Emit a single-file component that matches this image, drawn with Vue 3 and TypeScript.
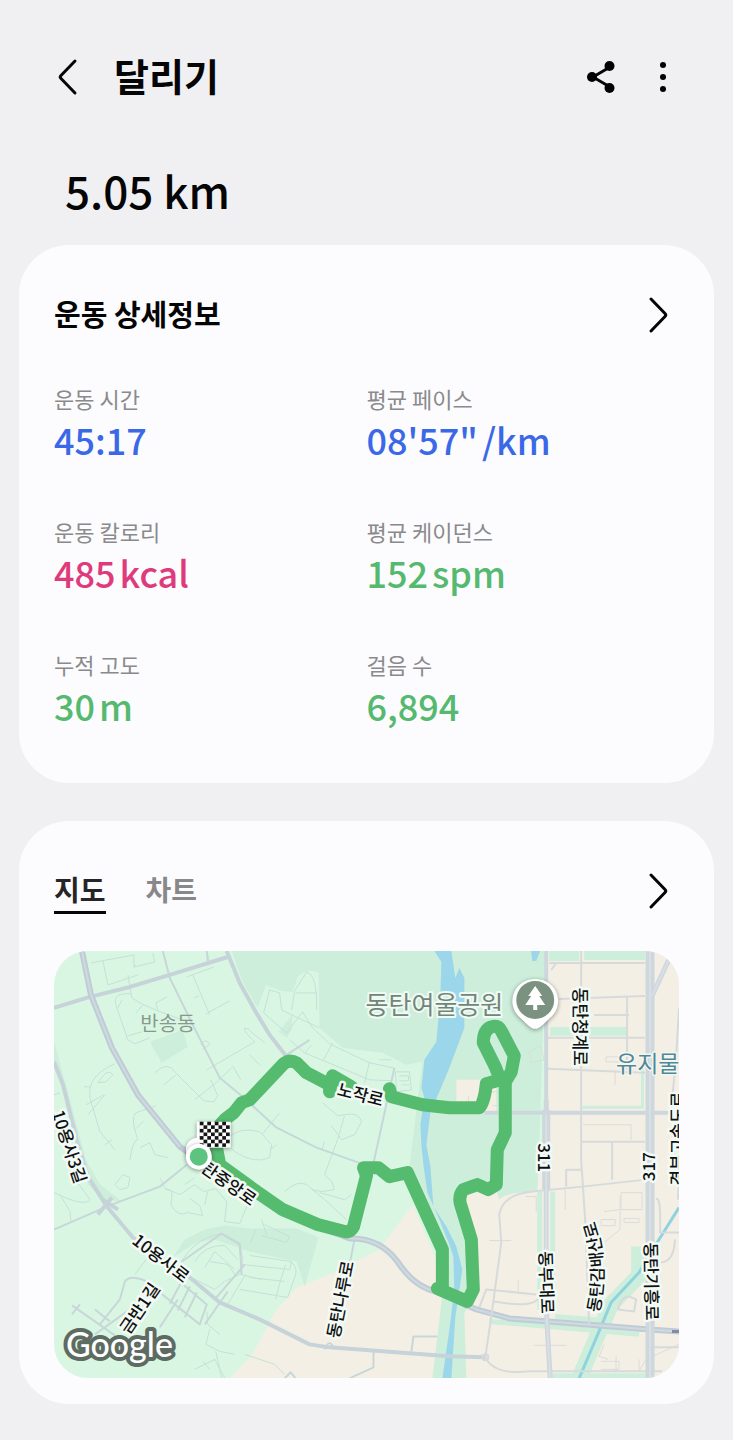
<script setup lang="ts">
import { ref } from 'vue'

interface Stat {
  label: string
  value: string
  unit?: string
  tone: 'blue' | 'pink' | 'green'
}

interface RoadLabel {
  text: string
  x: number
  y: number
  angle: number
}

const stats: Stat[] = [
  { label: '운동 시간', value: '45:17', tone: 'blue' },
  { label: '평균 페이스', value: '08\'57"', unit: '/km', tone: 'blue' },
  { label: '운동 칼로리', value: '485', unit: 'kcal', tone: 'pink' },
  { label: '평균 케이던스', value: '152', unit: 'spm', tone: 'green' },
  { label: '누적 고도', value: '30', unit: 'm', tone: 'green' },
  { label: '걸음 수', value: '6,894', tone: 'green' },
]

const tabs = ['지도', '차트']
const activeTab = ref('지도')

const roadLabels: RoadLabel[] = [
  { text: '노작로', x: 361, y: 1095, angle: 14 },
  { text: '동탄청계로', x: 581, y: 1027, angle: 90 },
  { text: '311', x: 545, y: 1158, angle: 90 },
  { text: '317', x: 650, y: 1167, angle: -90 },
  { text: '동부대로', x: 547, y: 1283, angle: 88 },
  { text: '동탄기흥로', x: 652, y: 1282, angle: 89 },
  { text: '동탄나루로', x: 341, y: 1300, angle: -79 },
  { text: '경부고속도로', x: 679, y: 1139, angle: -90 },
  { text: '10용사3길', x: 69, y: 1147, angle: 72 },
  { text: '10용사로', x: 161, y: 1259, angle: 38 },
  { text: '금반1길', x: 140, y: 1309, angle: -56 },
  { text: '탄중앙로', x: 229, y: 1184, angle: 35 },
]

const flagCells: { x: number; y: number }[] = []
for (let row = 0; row < 7; row++) {
  for (let col = 0; col < 8; col++) {
    if ((row + col) % 2 === 0) flagCells.push({ x: 200 + col * 3.75, y: 1122 + row * 3.6 })
  }
}
</script>

<template>
  <main class="page">
    <header class="bar">
      <button class="icon-button back" type="button" aria-label="뒤로">
        <svg width="22" height="40" viewBox="0 0 22 40"><path d="M19 4 5 18.500Q3.500 20 5 21.500L19 36" /></svg>
      </button>
      <h1 class="title">달리기</h1>
      <button class="icon-button share" type="button" aria-label="공유">
        <svg width="32" height="34" viewBox="0 0 32 34">
          <path d="M24 7 7 17l17 10" />
          <circle cx="23.500" cy="6" r="5" /><circle cx="6" cy="17" r="5" /><circle cx="23.500" cy="28" r="5" />
        </svg>
      </button>
      <button class="icon-button more" type="button" aria-label="더보기">
        <svg width="10" height="34" viewBox="0 0 10 34">
          <circle cx="5" cy="5" r="3" /><circle cx="5" cy="17" r="3" /><circle cx="5" cy="29" r="3" />
        </svg>
      </button>
    </header>

    <p class="distance">5.05 km</p>

    <section class="card details">
      <div class="card-head">
        <h2 class="heading">운동 상세정보</h2>
        <button class="icon-button" type="button" aria-label="운동 상세정보 보기">
          <svg width="22" height="40" viewBox="0 0 22 40"><path d="M4 4 18 18.500Q19.500 20 18 21.500L4 36" /></svg>
        </button>
      </div>
      <dl class="stats">
        <div v-for="s in stats" :key="s.label">
          <dt>{{ s.label }}</dt>
          <dd :class="s.tone">{{ s.value }}<span v-if="s.unit" class="unit">{{ s.unit }}</span></dd>
        </div>
      </dl>
    </section>

    <section class="card route-card">
      <div class="card-head">
        <div class="tabs" role="tablist">
          <button
            v-for="t in tabs"
            :key="t"
            type="button"
            role="tab"
            class="tab"
            :class="{ active: t === activeTab }"
            :aria-selected="t === activeTab"
            @click="activeTab = t"
          >{{ t }}</button>
        </div>
        <button class="icon-button" type="button" aria-label="지도 크게 보기">
          <svg width="22" height="40" viewBox="0 0 22 40"><path d="M4 4 18 18.500Q19.500 20 18 21.500L4 36" /></svg>
        </button>
      </div>

      <svg class="map" viewBox="54 951 626 428" role="img" aria-label="달리기 경로 지도">
        <rect x="54" y="951" width="626" height="428" fill="#d9f6e3" />

        <!-- built-up land -->
        <g class="land">
          <path d="M230 1379 252 1356 277 1310 297 1288 330 1275 380 1250 413 1205 450 1290 440 1379Z" />
          <path d="M546 951H680V1379H465V1313L475 1290 466 1190H538L546 1120Z" />
        </g>

        <!-- parks -->
        <g class="park">
          <path d="M232 951 242 980 258 1008 266 985 282 991 293 992 298 977Q308 967 319 973L320 1028 343 1048 383 1053 407 1065 423 1062 416 1118 410 1168 440 1245 443 1295 433 1379H467L465 1313 475 1300 470 1230 463 1195 497 1190 500 1200Q505 1193 538 1192L541 1117 546 951Z" />
          <path d="M150 1042 183 1030 188 1047 162 1063Z" />
          <path d="M54 1042 70 1100 86 1160 100 1185 122 1202 104 1200 88 1185 75 1130 54 1060Z" />
          <path d="M173 1258 185 1240 205 1230 225 1226 250 1229 297 1229 319 1238 305 1287 297 1262 250 1252 215 1240 196 1243Z" />
          <path d="M279 1032 293 1014 292 1030 287 1038Z" />
          <path d="M550 951H580V961H550ZM585 951H646V960H585ZM551 1027H627V1036H551ZM583 1106H645V1109H583ZM642 1070H645V1109H642ZM538 1192H543V1310H538ZM551 1192H556V1310H551ZM632 1247H643V1285H632ZM550 1374H650V1379H550Z" />
          <path d="M490 1322 550 1327 640 1335M556 1317 605 1321" class="park-line" />
          <path d="M652 1258 640 1276 612 1305 600 1332 580 1379" class="bank" />
        </g>
        <path class="land" d="M457 1080H497V1112H457Z" />

        <!-- water -->
        <path class="water" d="M435 951 442 962 441 995 437 1042 425 1060 422 1088 425 1098 421 1125 422 1145 424 1165 428 1193 440 1220 450 1245 454 1257 455 1290 450 1330 443 1379H452L456 1317 463 1270 457 1247 447 1227 434 1207 431 1167 427 1145 431 1112 440 1092 450 1068 465 1028 465 978 460 968 456 978 452 951ZM532 951H541L537 961H533Z" />
        <path class="creek" d="M680 1208 660 1240 640 1273 612 1303 602 1327 580 1379" />

        <!-- lanes on the west side -->
        <g class="lane">
          <path d="M91 963 112 959 134 955 134 967 155 962 153 953M103 961 108 985 138 975M134 966 136 965M128 975 132 998 142 1004 158 1011 180 1019M158 1011 156 1003 167 997M132 994Q112 992 116 1005L128 1040 135 1044 150 1038M118 1008 122 1000M136 1013 143 1005M128 1036 142 1032" />
          <path d="M187 977 214 967M193 975 210 1015M194 998 199 996M206 1014 230 1001M207 951 210 963M201 1045Q206 1037 210 1045L203 1049M207 1070 255 1042 248 1035Q240 1025 250 1030M155 1073Q168 1060 176 1073L204 1101 214 1102 218 1096 211 1080M164 1085 176 1075M195 1100 215 1084 232 1068M241 1080 233 1066" />
          <path d="M115 1064Q82 1078 92 1105L100 1132 115 1150M84 1087H91M86 1105 104 1095M98 1083Q108 1067 113 1075L106 1082ZM88 1115 105 1095M135 1130 144 1121M130 1160Q133 1140 138 1140 130 1118 136 1113L156 1106M140 1148 150 1143 155 1155 168 1158M105 1145 112 1140" />
          <path d="M54 1193Q85 1208 90 1200L72 1175M60 1195 70 1212 71 1222M54 1095 60 1093M115 1185 123 1175 130 1178 128 1188 120 1190ZM160 1178 166 1190Q175 1188 171 1205 178 1218 188 1213L203 1216 200 1206 190 1199M166 1189 180 1195 195 1185 204 1192 216 1189 227 1202 225 1222 240 1224M185 1185 195 1178M208 1192 205 1205M240 1224 250 1200" />
          <path d="M230 1137Q240 1127 260 1132L272 1145 270 1158Q255 1165 235 1152L228 1145M270 1150 277 1145M263 1134 280 1113M323 1103 338 1116 345 1115Q360 1112 362 1122L355 1135 342 1140 332 1126M345 1116 338 1140 325 1175 332 1182 335 1190 322 1192 312 1190M285 1192Q298 1180 307 1185L325 1200 347 1220M320 1193 345 1200 352 1195M322 1150 325 1142" />
          <path d="M264 1013 270 990 280 993 282 1010 290 1014M292 1010 295 991 307 972Q318 975 317 1010M296 993H317M264 1013 287 1033 303 1012 313 1028 330 1044 370 1063 394 1068M290 1014 320 1028M290 1040 305 1053 312 1045M305 1053 370 1080 393 1081M324 1060 333 1043M365 1083 370 1062M380 1060H392M396 1072H410L412 1090 397 1092ZM400 1076H409V1081H400M402 1085H410" />
          <path d="M262 1220 267 1235M265 1225 290 1237 287 1243 262 1236M251 1243 256 1230M250 1031 265 1043M250 1055 260 1065" />
          <path d="M178 1270Q190 1240 222 1234L240 1243 243 1260 240 1275 262 1280M195 1262Q205 1245 225 1246L238 1260M205 1268 215 1252 235 1270M210 1262 228 1265 235 1275M180 1272 215 1290 225 1282 240 1275M226 1308 246 1275M242 1265 290 1270 292 1262 250 1256M290 1262Q298 1266 296 1275L288 1298 240 1290M250 1278 285 1282M276 1300 280 1284 286 1265" />
          <path d="M210 1330 206 1345 220 1352 235 1355M207 1312 208 1325 220 1335M195 1370 215 1360 225 1379M203 1362 210 1370M216 1352 222 1379M135 1275 150 1255M245 1355 275 1365 285 1375" />
        </g>
        <g class="street">
          <path d="M54 1230 100 1210 117 1203 160 1187 187 1165" />
          <path d="M100 1325 120 1300 125 1282Q130 1275 145 1281L200 1325 207 1305 175 1278M185 1318 197 1293M178 1311 190 1287M170 1304 182 1282M160 1328 178 1300M95 1310 110 1322M72 1306 115 1336M72 1315 80 1305M95 1335 130 1310" />
          <path d="M182 1262 222 1234 240 1245 242 1275M215 1300 245 1265M205 1325 228 1292" />
          <path d="M163 951 170 978 193 1025 220 1078 243 1097 277 1128 317 1148 373 1168M207 951 208 961M395 1068 373 1168M355 1240 348 1275M374 1352V1368L350 1379M287 1055 310 1040" />
          <path d="M412 1352 414 1337H438M285 1379 291 1373 296 1379M325 1350Q330 1338 335 1350" />
        </g>
        <g class="avenue">
          <path d="M54 1008 90 997 130 987 170 975 228 957" />
          <path d="M227 951 240 983 256 1012 270 1035 287 1057 330 1085" />
          <path d="M54 1062 63 1085 78 1145 88 1177 107 1207 133 1238 190 1278 220 1303 260 1320 310 1345 330 1348 383 1352 450 1357 486 1358" />
          <path d="M98 1215 112 1198M103 1200 118 1210" />
        </g>
        <path class="trunk" d="M82 951 91 995 112 1048 138 1095 180 1147 215 1170 283 1214 350 1239Q380 1238 398 1262 415 1288 437 1292L477 1310 510 1319 550 1322 650 1330 680 1332" />
        <path class="trunk-core" d="M82 951 91 995 112 1048 138 1095 180 1147M350 1239Q380 1238 398 1262 415 1288 437 1292L477 1310 510 1319 550 1322 650 1330 680 1332" />

        <!-- eastern grid -->
        <g class="lane east">
          <path d="M530 1052 541 1046 545 1060 532 1063ZM607 1057H621V1062H607ZM616 1072V1085M584 1125H632V1140M566 1190V1210M490 1241H512M519 1280V1292M526 1197H537V1212M535 1346H567M622 1193H643V1210H622ZM602 1220H616V1226H602ZM621 1196V1230L605 1243M605 1212 621 1210M625 1219H640V1223H625ZM605 1345 600 1357 609 1360M602 1362H620V1370H602M617 1357V1372H640V1360M640 1372 647 1360 680 1345" />
          <path d="M567 1178V1170H582M490 1092H500V1106H493M469 1096V1105" />
        </g>
        <g class="street east">
          <path d="M550 963H646M552 970 557 963M560 999 646 996M595 1015H630M628 997V1070M548 1038H646M548 1069 646 1073M582 951V1160L586 1220 590 1325M582 1142H646M613 1142V1180M567 1187V1170H582" />
          <path d="M493 1310 502 1243 500 1215Q503 1195 533 1192L583 1187 647 1180M493 1310 486 1358Q495 1376 530 1372H663M480 1308 487 1290 537 1295M495 1302Q540 1310 540 1295M657 1200Q662 1195 661 1233H680M662 1263Q675 1262 676 1240M619 1310Q622 1297 630 1297L637 1300 635 1312ZM655 1348H680M680 1008 677 1060M676 1070 672 1110M680 1180 679 1200" />
          <circle cx="486" cy="1358" r="3" />
        </g>
        <g class="grid-road">
          <path d="M485 1113H680" stroke-width="4" />
          <path d="M547 951V1110" stroke-width="4" />
          <path d="M547 1100V1310L551 1379" stroke-width="5" />
          <path d="M547 1110V1190" stroke-width="8" />
          <path d="M651 951V1379" stroke-width="9" />
          <path d="M672 955 653 996" stroke-width="5" />
        </g>
        <path class="grid-core" d="M651 951V1379M547 1115V1310L551 1379M671 957 653 996" />
        <path d="M673 1332H680" stroke="#8589a8" stroke-width="3" />

        <!-- recorded route -->
        <path
          class="route"
          d="M214 1132 226 1119 234 1113 242 1103 250 1100 284 1064Q290 1059 297 1063L307 1073 330 1085V1092L333 1076 352 1087M390 1089 392 1097 423 1105 450 1108 480 1108Q485 1103 487 1084L501 1080 496 1067 484 1043Q484 1030 492 1027 499 1025 502 1031L515 1056 512 1072 506 1082V1133L498 1150 497 1185 489 1190 478 1185 464 1190Q459 1196 461 1204L472 1240 474 1290 468 1302 438 1289H443V1250L408 1173 390 1177 379 1168 364 1168 367 1176 354 1227Q351 1233 345 1232L318 1225 283 1210 257 1192 220 1165 216 1144"
        />

        <g class="road-labels">
          <text
            v-for="r in roadLabels"
            :key="r.text"
            :x="r.x"
            :y="r.y"
            dy="6"
            :transform="`rotate(${r.angle} ${r.x} ${r.y})`"
          >{{ r.text }}</text>
          <path id="gambaesan" d="M599 1318Q612 1265 594 1217" fill="none" stroke="none" />
          <text><textPath href="#gambaesan" startOffset="50%">동탄감배산로</textPath></text>
        </g>
        <text class="district" x="168" y="1031">반송동</text>
        <text class="park-name" x="435" y="1014">동탄여울공원</text>
        <text class="poi" x="617" y="1072">유지물</text>

        <!-- park pin -->
        <g class="shadowed">
          <path d="M536 979a22 22 0 0 1 17 37C546 1022 541 1029 536 1029S526 1022 519 1016A22 22 0 0 1 536 979Z" fill="#fff" />
        </g>
        <circle cx="536" cy="1000" r="19" fill="#7b9281" />
        <path d="M536 986 543 996H540L546 1005H538V1010H534V1005H526L532 996H529Z" fill="#fff" />

        <!-- start and finish markers -->
        <g class="shadowed">
          <circle cx="198" cy="1150" r="12" fill="#fff" />
          <path d="M197 1122H200V1150H197Z" fill="#fff" />
          <rect x="200" y="1122" width="31" height="26" fill="#fff" />
        </g>
        <rect v-for="(c, i) in flagCells" :key="i" :x="c.x" :y="c.y" width="3.750" height="3.600" fill="#151515" />
        <g class="shadowed"><circle cx="199" cy="1157" r="13" fill="#fff" /></g>
        <circle cx="199" cy="1157" r="9" fill="#5cc47f" />

        <text class="brand" x="66" y="1358">Google</text>
      </svg>
    </section>
  </main>
</template>

<style>
body {
  margin: 0;
  background: #f0f0f2;
}
</style>

<style scoped>
.page {
  min-height: 100vh;
  box-sizing: border-box;
  padding: 48px 19px 35px;
  background: #f0f0f2;
  color: #050505;
  font-family: "Noto Sans CJK KR", "Noto Sans", sans-serif;
}

.bar {
  display: flex;
  align-items: center;
  height: 58px;
  padding: 0 46px 0 37px;
}

.icon-button {
  display: flex;
  padding: 0;
  border: 0;
  background: none;
  cursor: pointer;
}

.icon-button path {
  fill: none;
  stroke: #050505;
  stroke-width: 3;
  stroke-linecap: round;
  stroke-linejoin: round;
}

.title {
  flex: 1;
  margin: 0 0 0 36px;
  padding-bottom: 4px;
  font-size: 38px;
  line-height: 54px;
  font-weight: 700;
}

.more {
  margin-left: 40px;
}

.distance {
  margin: 52px 46px 22px;
  font-size: 44px;
  line-height: 65px;
  font-weight: 500;
}

.card {
  padding: 50px 35px 53px;
  border-radius: 50px;
  background: #fcfcfe;
}

.route-card {
  margin-top: 38px;
  padding-bottom: 26px;
}

.card-head {
  display: flex;
  align-items: flex-start;
  justify-content: space-between;
  padding-right: 10px;
}

.heading {
  margin: 0;
  font-size: 29px;
  line-height: 36px;
  font-weight: 700;
}

.stats {
  display: grid;
  grid-template-columns: 1fr 1fr;
  row-gap: 51px;
  margin: 47px 0 0;
}

dt {
  color: #8a8a8c;
  font-size: 22px;
  line-height: 32px;
}

dd {
  margin: 0;
  font-size: 36px;
  line-height: 50px;
  font-weight: 500;
}

.unit {
  margin-left: 4px;
}

.blue { color: #3b68e6; }
.pink { color: #df3a7c; }
.green { color: #55b96f; }

.tabs {
  display: flex;
  gap: 40px;
}

.tab {
  padding: 0 0 4px;
  border: 0;
  border-bottom: 3px solid transparent;
  background: none;
  color: #88888a;
  font: inherit;
  font-size: 28px;
  line-height: 36px;
  font-weight: 700;
  cursor: pointer;
}

.tab.active {
  border-color: #050505;
  color: #252527;
}

.map {
  display: block;
  width: 100%;
  margin-top: 37px;
  border-radius: 34px;
}

.map path { stroke-linejoin: round; }
.land { fill: #f4efe5; }
.park { fill: #cceedb; }
.park-line { fill: none; stroke: #cceedb; stroke-width: 5; }
.bank { fill: none; stroke: #cceedb; stroke-width: 16; }
.water { fill: #9bd6ea; }
.creek { fill: none; stroke: #8fd3e0; stroke-width: 3; }
.lane { fill: none; stroke: #c6dfd8; stroke-width: 1; }
.street { fill: none; stroke: #c7d7d9; stroke-width: 2; }
.lane.east { stroke: #dadcda; }
.street.east { stroke: #d6dadb; }
.avenue { fill: none; stroke: #c6d3d9; stroke-width: 4; }
.trunk { fill: none; stroke: #c0ccd5; stroke-width: 6; }
.trunk-core { fill: none; stroke: #cedae0; stroke-width: 2; }
.grid-road { fill: none; stroke: #ced7dc; }
.grid-core { fill: none; stroke: #d9dfe4; stroke-width: 2; }
.route { fill: none; stroke: #55bb6e; stroke-width: 13; stroke-linecap: round; }

.map text {
  paint-order: stroke;
  stroke-linejoin: round;
}

.road-labels text {
  fill: #111;
  stroke: #f2faf5;
  stroke-width: 5px;
  font-size: 17px;
  font-weight: 500;
  text-anchor: middle;
}

.district {
  fill: #87998f;
  font-size: 20px;
  text-anchor: middle;
}

.park-name {
  fill: #71857a;
  stroke: #effaf3;
  stroke-width: 4px;
  font-size: 25px;
  text-anchor: middle;
}

.poi {
  fill: #4d8998;
  stroke: #f4f5ef;
  stroke-width: 3px;
  font-size: 23px;
}

.brand {
  fill: #fff;
  stroke: #5d6b62;
  stroke-width: 8px;
  font-family: Lato, sans-serif;
  font-size: 34px;
  font-weight: 500;
}

.shadowed {
  filter: drop-shadow(0 1px 2px rgba(0, 0, 0, 0.4));
}
</style>
